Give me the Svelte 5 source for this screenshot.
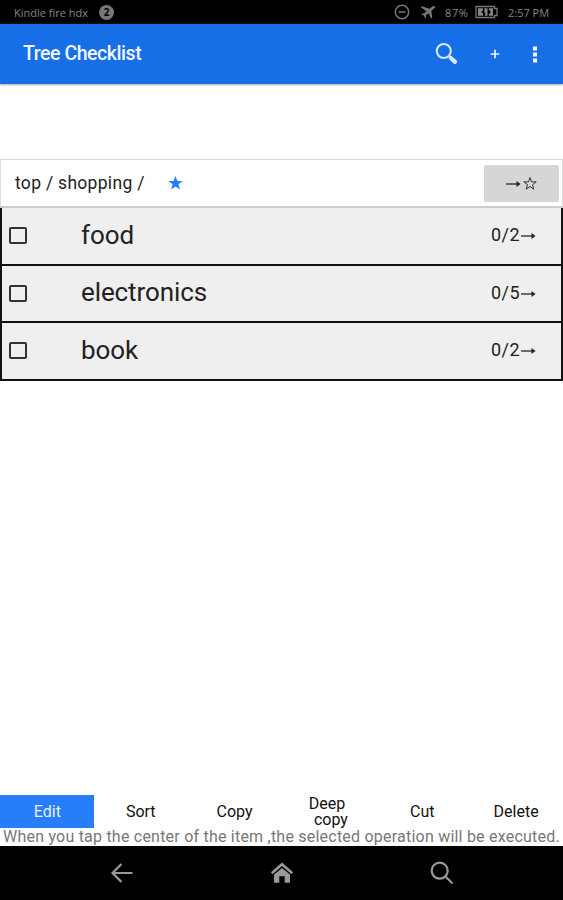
<script>
  let path = ['top', 'shopping'];
  let items = [
    { name: 'food', done: 0, total: 2, checked: false },
    { name: 'electronics', done: 0, total: 5, checked: false },
    { name: 'book', done: 0, total: 2, checked: false }
  ];
  let operations = ['Edit', 'Sort', 'Copy', 'Deep copy', 'Cut', 'Delete'];
  let selected = 'Edit';
</script>

<div class="screen">
  <div class="status">
    <span class="device">Kindle fire hdx</span>
    <span class="count">2</span>
    <svg class="dnd" width="16" height="16" viewBox="0 0 16 16">
      <circle cx="8" cy="8" r="6.7" />
      <path d="M4.5 8h7" />
    </svg>
    <svg class="plane" width="16" height="16" viewBox="0 0 16 16">
      <path d="M15 2.200c-.8-.6-2-.2-3 .6L9.500 4.800 1.800 2.200.8 3.200 6.400 7.300 4.200 9.600 2 9.400 1.200 10.200 3.900 11.600 5.200 14.400 6 13.700 5.900 11.300 8.600 9.200 11.200 14.600 12.300 13.600 11.300 6.900 14 4.600C14.900 3.800 15.300 2.900 15 2.200z" />
    </svg>
    <span class="percent">87%</span>
    <svg class="battery" width="23" height="14" viewBox="0 0 23 14">
      <path class="case" d="M1 1.500h18.500v2h2.500v7h-2.500v2H1z" />
      <path class="charge" d="M3 3.300h5v2.500H6.500v2H8v2.900H3zM9.500 3.300h3v7.400h-3l1.200-3.200H9.300zM14 3.300h4v7.400h-4V8.500h1.500v-3H14z" />
    </svg>
    <span class="time">2:57 PM</span>
  </div>

  <header>
    <h1>Tree Checklist</h1>
    <svg class="search" width="24" height="24" viewBox="0 0 24 24">
      <circle cx="8.800" cy="9" r="7" />
      <path d="M13.800 14l2.500 2.500" />
      <path class="handle" d="M15.800 16l4.200 3.900" />
    </svg>
    <svg class="plus" width="10" height="10" viewBox="0 0 10 10">
      <path d="M5 .7v8.600M.7 5h8.600" />
    </svg>
    <svg class="more" width="4" height="17" viewBox="0 0 4 17">
      <path d="M0 .5h4v4H0zM0 6.500h4v4H0zM0 12.500h4v4H0z" />
    </svg>
  </header>

  <div class="crumbs">
    <span class="path">{path.join(' / ')} /</span>
    <svg class="star" width="15" height="14" viewBox="0 0 15 14">
      <path d="M7.500 0l1.800 5h5.400l-4.300 3.300 1.600 5.300-4.500-3.200L3 13.600l1.600-5.300L.3 5h5.400z" />
    </svg>
    <button class="jump" aria-label="Go to favorites">
      <svg width="32" height="15" viewBox="0 0 32 15">
        <path class="line" d="M0 8h12" />
        <path class="head" d="M10.500 5L14.500 8l-4 3z" />
        <path class="outline" d="M24 1.500l1.500 4.400h4.700l-3.700 2.800 1.300 4.500-3.800-2.700-3.800 2.700 1.300-4.500-3.700-2.800h4.700z" />
      </svg>
    </button>
  </div>

  <div class="list">
    {#each items as item}
      <div class="item">
        <span class="box" class:checked={item.checked}></span>
        <span class="name">{item.name}</span>
        <span class="progress">{item.done}/{item.total}</span>
        <svg width="15" height="8" viewBox="0 0 15 8">
          <path class="line" d="M0 4h12" />
          <path class="head" d="M10.500 1L14.500 4l-4 3z" />
        </svg>
      </div>
    {/each}
  </div>

  <div class="operations">
    {#each operations as op}
      <button class:selected={op === selected} on:click={() => (selected = op)}>
        {#each op.split(' ') as word, i}
          <span class:second={i > 0}>{word}</span>
        {/each}
      </button>
    {/each}
  </div>
  <p class="hint">When you tap the center of the item ,the selected operation will be executed.</p>

  <nav>
    <svg width="24" height="22" viewBox="0 0 24 22">
      <path class="stroke" d="M22.500 11H3M11.500 2L2.500 11l9 9" />
    </svg>
    <svg width="24" height="22" viewBox="0 0 24 22">
      <path class="fill" d="M12 6l8 6.600v8.200h-5.300v-6.500H9.300v6.500H4v-8.200z" />
      <path class="stroke roof" d="M1.700 11.300L12 2.200l10.300 9.100" />
    </svg>
    <svg width="24" height="24" viewBox="0 0 24 24">
      <circle class="stroke" cx="9.700" cy="9.700" r="8" />
      <path class="stroke" d="M15.500 15.500l7 7" />
    </svg>
  </nav>
</div>

<style>
  :global(body) {
    margin: 0;
    background: #fff;
  }
  .screen {
    display: flex;
    flex-direction: column;
    width: 563px;
    height: 900px;
    overflow: hidden;
    background: #fff;
    color: #222;
    font-family: Roboto, sans-serif;
    white-space: nowrap;
  }
  svg {
    display: block;
    flex: none;
    fill: none;
  }
  button {
    border: 0;
    padding: 0;
    background: none;
    color: inherit;
    font: inherit;
  }

  .status {
    display: flex;
    flex: none;
    align-items: center;
    box-sizing: border-box;
    height: 24px;
    padding: 0 14px;
    background: #000;
    color: #858585;
    font-family: 'Open Sans', sans-serif;
    font-size: 11px;
  }
  .device {
    width: 85px;
  }
  .count {
    width: 15px;
    height: 15px;
    border-radius: 50%;
    background: #777;
    color: #000;
    font-size: 10px;
    font-weight: bold;
    line-height: 15px;
    text-align: center;
  }
  .dnd {
    margin-left: auto;
    stroke: #777;
    stroke-width: 1.5;
  }
  .plane {
    margin-left: 10px;
    fill: #777;
  }
  .percent {
    width: 30px;
    margin-left: 9px;
    letter-spacing: 0.6px;
  }
  .case {
    stroke: #777;
    stroke-width: 1.3;
  }
  .charge {
    fill: #888;
  }
  .time {
    width: 41px;
    margin-left: 10px;
  }

  header {
    display: flex;
    flex: none;
    align-items: center;
    box-sizing: border-box;
    height: 60px;
    padding: 0 26px 0 23px;
    background: #176fe8;
    box-shadow: 0 1px 2px #aaa;
    color: #f2f6ff;
  }
  h1 {
    margin: 0 auto 1px 0;
    font-size: 19.500px;
    font-weight: 500;
    letter-spacing: -0.45px;
  }
  .search {
    stroke: #d9e7ff;
    stroke-width: 2;
  }
  .search .handle {
    stroke-width: 4.200;
    stroke-linecap: round;
  }
  .plus {
    margin: 0 33px 0 31px;
    stroke: #f2f6ff;
    stroke-width: 1.7;
  }
  .more {
    fill: #f2f6ff;
  }

  .crumbs {
    display: flex;
    flex: none;
    align-items: center;
    box-sizing: border-box;
    height: 49px;
    margin-top: 75px;
    padding: 0 3px 0 14px;
    border: 1px solid #ddd;
    border-bottom: 2px solid #ccc;
  }
  .path {
    width: 153px;
    font-size: 17.500px;
    letter-spacing: 0.3px;
  }
  .star {
    fill: #257cf8;
  }
  .jump {
    display: flex;
    align-items: center;
    justify-content: center;
    width: 75px;
    height: 37px;
    margin-left: auto;
    border-radius: 2px;
    background: #d5d7d6;
  }
  .line {
    stroke: #333;
    stroke-width: 1.4;
  }
  .head {
    fill: #222;
  }
  .outline {
    stroke: #333;
    stroke-width: 1;
  }

  .list {
    flex: none;
    border: solid #111;
    border-width: 0 2px 0 2px;
  }
  .item {
    display: flex;
    align-items: center;
    box-sizing: border-box;
    height: 57.500px;
    padding: 0 25px 2px 7px;
    border-bottom: 2px solid #111;
    background: #efefef;
  }
  .box {
    box-sizing: border-box;
    width: 18px;
    height: 17px;
    margin-top: 2px;
    border: 2px solid #333;
    border-radius: 2px;
  }
  .checked {
    background: #333;
  }
  .name {
    margin: 0 auto 0 54px;
    font-size: 26px;
    letter-spacing: -0.1px;
  }
  .progress {
    width: 30px;
    font-size: 18px;
    letter-spacing: 0.5px;
  }
  .item svg {
    margin-top: 3px;
  }

  .operations {
    display: grid;
    grid-template-columns: repeat(6, 1fr);
    height: 33px;
    margin-top: auto;
    color: #111;
    font-size: 16px;
    line-height: 16px;
  }
  .operations button {
    display: flex;
    flex-direction: column;
    align-items: center;
    justify-content: center;
  }
  .operations button:has(.second) {
    padding-right: 3px;
  }
  .second {
    padding-left: 8px;
  }
  .operations .selected {
    padding-left: 1px;
    background: #287dfa;
    color: #e8f1ff;
  }
  .hint {
    flex: none;
    height: 18px;
    margin: 0;
    padding-left: 3px;
    color: #777;
    font-size: 16px;
    line-height: 18px;
    letter-spacing: 0.22px;
  }

  nav {
    display: flex;
    flex: none;
    align-items: center;
    justify-content: space-between;
    box-sizing: border-box;
    height: 54px;
    padding: 0 109px 0 110px;
    background: #000;
  }
  .stroke {
    stroke: #999;
    stroke-width: 2.200;
  }
  .roof {
    stroke-width: 2.600;
  }
  .fill {
    fill: #999;
  }
</style>
